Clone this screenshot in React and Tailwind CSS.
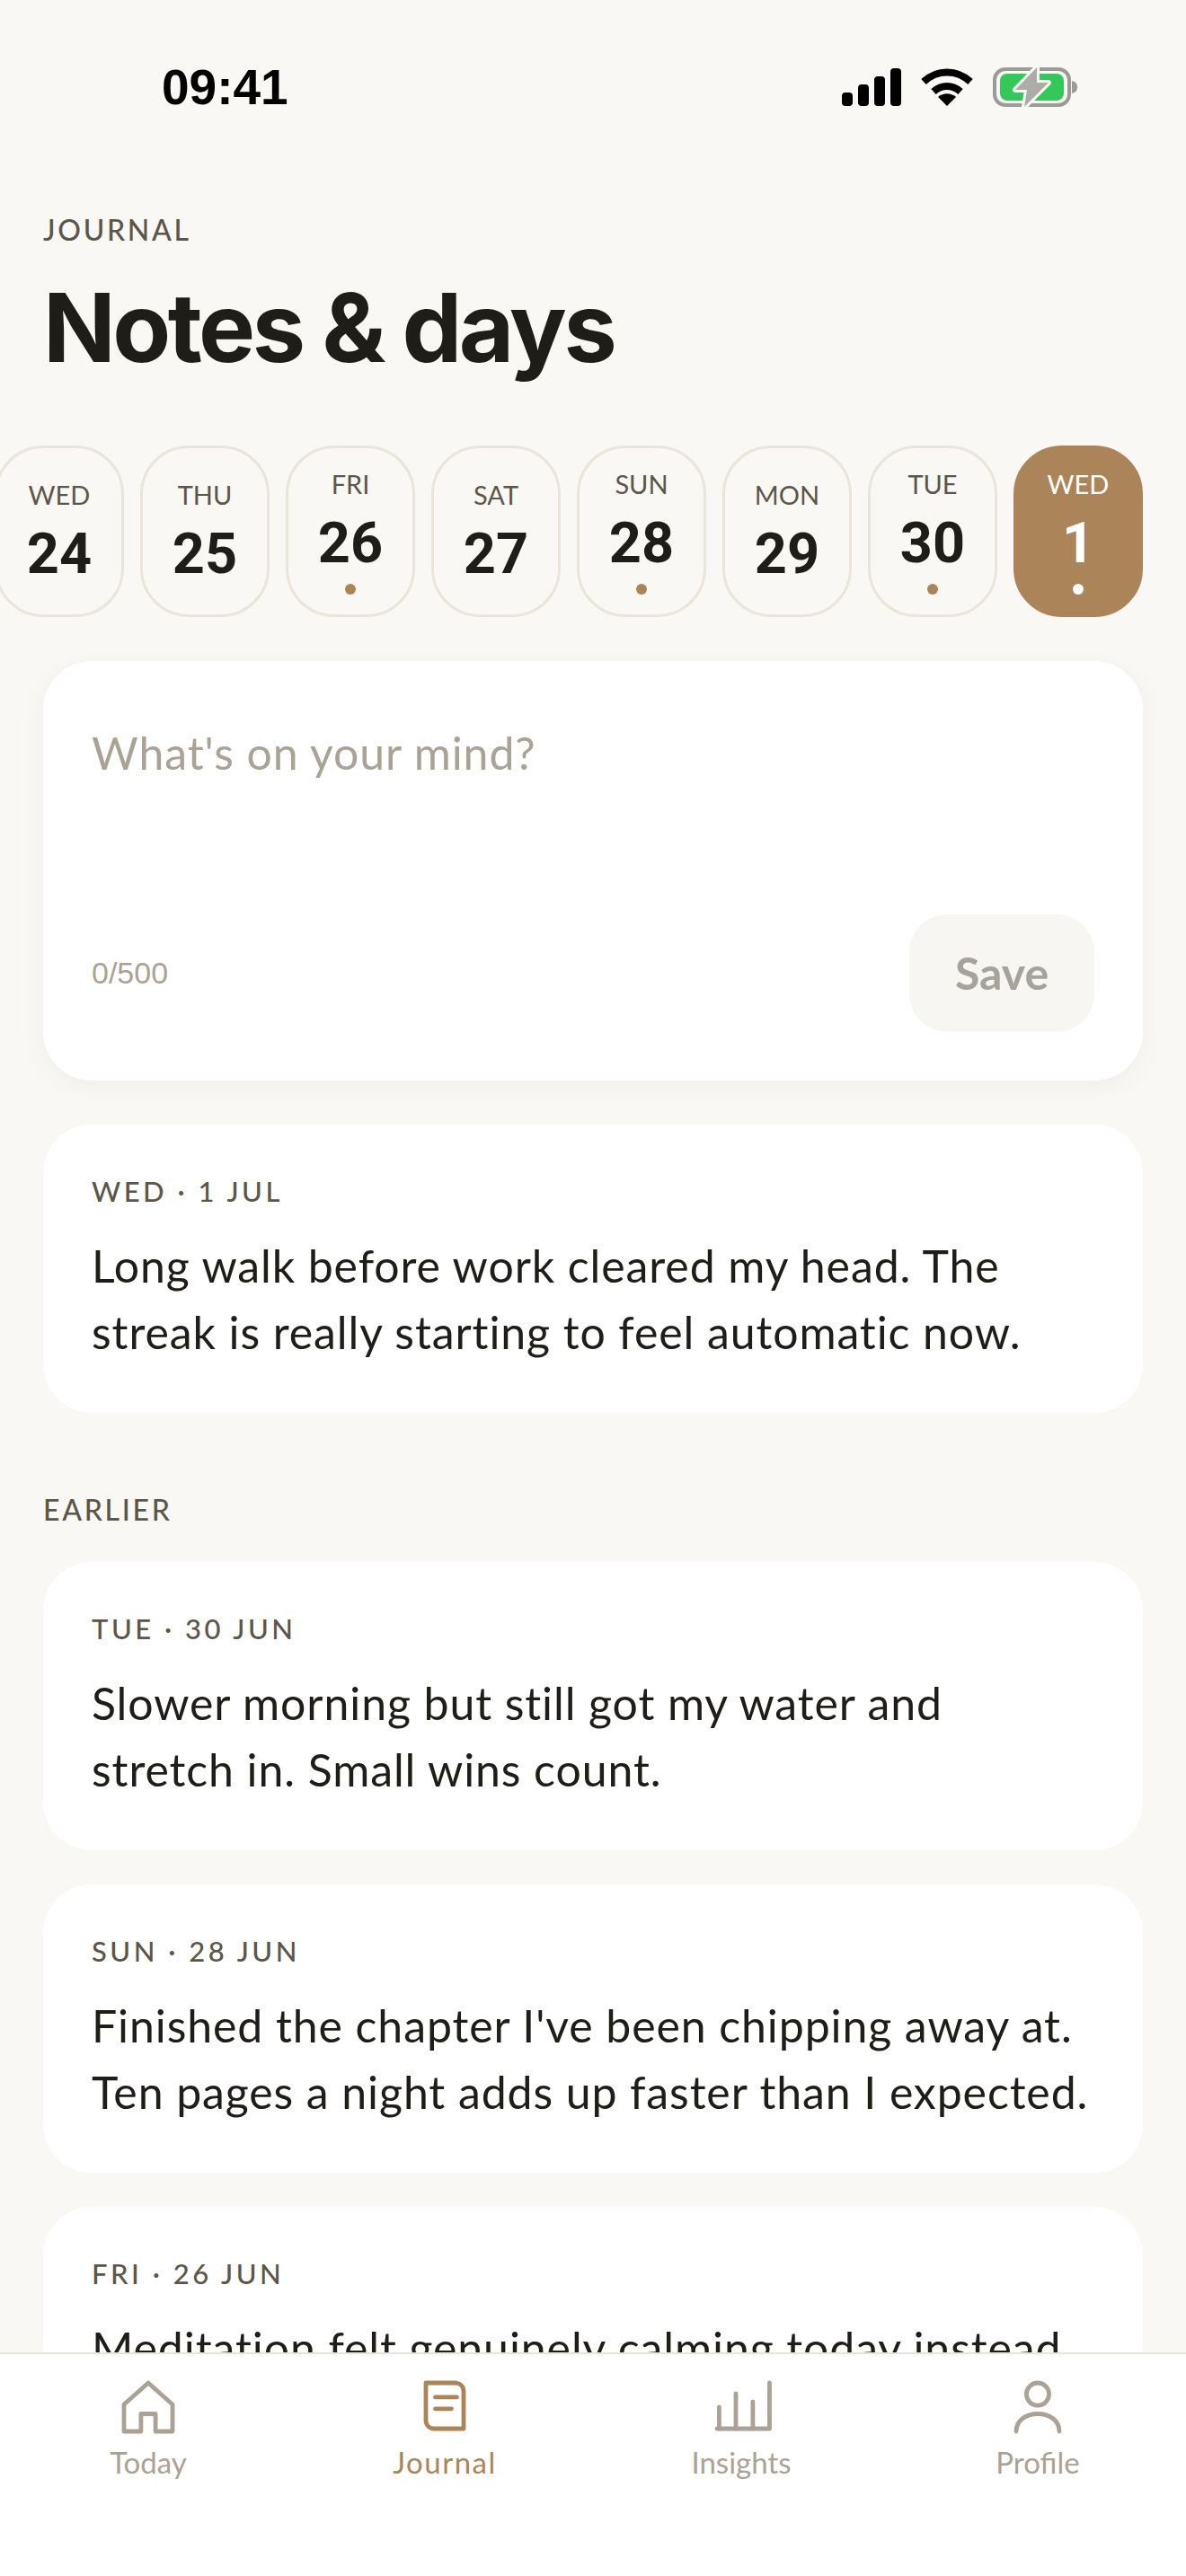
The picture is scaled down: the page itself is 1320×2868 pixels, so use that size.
// App.jsx
const sans = { fontFamily: 'Lato, sans-serif' }

const days = [
  { name: 'WED', num: 24 },
  { name: 'THU', num: 25 },
  { name: 'FRI', num: 26, dot: true },
  { name: 'SAT', num: 27 },
  { name: 'SUN', num: 28, dot: true },
  { name: 'MON', num: 29 },
  { name: 'TUE', num: 30, dot: true },
  { name: 'WED', num: 1, dot: true, active: true },
]

const earlier = [
  { date: 'TUE · 30 JUN', lines: ['Slower morning but still got my water and', 'stretch in. Small wins count.'] },
  { date: 'SUN · 28 JUN', lines: ["Finished the chapter I've been chipping away at.", 'Ten pages a night adds up faster than I expected.'] },
  { date: 'FRI · 26 JUN', lines: ['Meditation felt genuinely calming today instead', 'of like another thing on my list.'] },
]

function StatusBar() {
  return (
    <div className="relative h-[200px] shrink-0">
      <span className="absolute left-[180px] top-[66px] text-[55px] leading-[62px] font-bold text-black font-['Liberation_Sans',sans-serif]">
        09:41
      </span>
      <svg className="absolute left-[937px] top-[76px]" width="66" height="42" viewBox="0 0 66 42" fill="#000">
        <rect x="0" y="27" width="12" height="15" rx="4" />
        <rect x="18" y="18" width="12" height="24" rx="4" />
        <rect x="36" y="9" width="12" height="33" rx="4" />
        <rect x="54" y="0" width="12" height="42" rx="4" />
      </svg>
      <svg className="absolute left-[1025px] top-[75px]" width="58" height="43" viewBox="0 0 58 43" fill="none">
        <path d="M3 16 C18 2 40 2 55 16" stroke="#000" strokeWidth="8" />
        <path d="M14 27 C23 19 35 19 44 27" stroke="#000" strokeWidth="8" />
        <path d="M29 43 L19 33 C25 28 33 28 39 33 Z" fill="#000" />
      </svg>
      <svg className="absolute left-[1105px] top-[74px]" width="94" height="46" viewBox="0 0 94 46" fill="none">
        <rect x="2" y="3" width="83" height="40" rx="12" stroke="#9a9a96" strokeWidth="4" />
        <rect x="8" y="8" width="71" height="30" rx="8" fill="#34c759" />
        <path d="M88 16 C92 17 94 19 94 23 C94 27 92 29 88 30 Z" fill="#9a9a96" />
        <path d="M49 1 L25 26 H38 L35 45 L62 18 H49 Z" fill="#acaca8" stroke="#faf8f5" strokeWidth="6" strokeLinejoin="round" paintOrder="stroke" />
      </svg>
    </div>
  )
}

function DayChip({ day }) {
  const box = day.active ? 'bg-[#ab8559] border-[#ab8559]' : 'border-[#e9e5d8]'
  return (
    <div className={`w-[144px] h-[191px] shrink-0 rounded-[54px] border-[3px] flex flex-col items-center justify-center ${box}`}>
      <span className={`text-[29px] leading-[36px] ${day.active ? 'text-white' : 'text-[#5c5648]'}`}>
        {day.name}
      </span>
      <span className={`mt-[15px] text-[63px] leading-[66px] font-bold font-['Roboto',sans-serif] ${day.active ? 'text-white' : 'text-[#1f1d18]'}`}>
        {day.num}
      </span>
      {day.dot && <span className={`mt-[12px] w-[12px] h-[12px] rounded-full ${day.active ? 'bg-white' : 'bg-[#ab8559]'}`} />}
    </div>
  )
}

function NoteCard({ date, lines }) {
  return (
    <div className="bg-white rounded-[54px] px-[54px] pt-[54px] pb-[53px] shrink-0">
      <p className="text-[31px] leading-[40px] tracking-[3.5px] font-medium text-[#5c5648]">{date}</p>
      <p className="mt-[26px] text-[50px] leading-[74px] tracking-[0.9px] whitespace-nowrap text-[#1f1d18] [font-variant-ligatures:none]">
        {lines[0]}
        <br />
        {lines[1]}
      </p>
    </div>
  )
}

function TabItem({ label, active, children }) {
  return (
    <div className={`flex flex-col items-center ${active ? 'text-[#ab8559]' : 'text-[#aaa294]'}`}>
      <svg width="72" height="72" viewBox="0 0 24 24" fill="none" stroke="currentColor" strokeWidth="1.6" strokeLinecap="round" strokeLinejoin="round">
        {children}
      </svg>
      <span className={`text-[33px] leading-[50px] ${active ? 'tracking-[1.5px]' : ''}`}>{label}</span>
    </div>
  )
}

export default function App() {
  return (
    <div style={sans} className="w-[1320px] h-[2868px] bg-[#faf8f5] flex flex-col overflow-hidden">
      <StatusBar />

      <div className="flex-1 min-h-0 overflow-hidden">
        <p className="pl-[48px] mt-[36px] text-[32px] leading-[40px] tracking-[2.7px] font-medium text-[#5c5648]">JOURNAL</p>
        <h1 className="pl-[48px] mt-[24px] text-[106px] leading-[130px] font-bold tracking-[-3.5px] text-[#1f1d18] font-['Inter',sans-serif]">
          Notes &amp; days
        </h1>

        {/* Day strip */}
        <div className="mt-[66px] pr-[48px] flex justify-end gap-[18px]">
          {days.map((d) => (
            <DayChip key={d.name + d.num} day={d} />
          ))}
        </div>

        {/* Composer */}
        <div className="mx-[48px] mt-[49px] h-[467px] bg-white rounded-[54px] shadow-[0_6px_24px_rgba(60,50,30,0.05)] px-[54px] pt-[72px] pb-[54px] flex flex-col justify-between">
          <p className="text-[50px] leading-[60px] tracking-[0.9px] text-[#aaa294]">What's on your mind?</p>
          <div className="flex items-center justify-between">
            <span className="text-[34px] text-[#aaa294] font-['Liberation_Sans',sans-serif]">0/500</span>
            <button className="w-[206px] h-[131px] rounded-[42px] bg-[#f7f6f2] text-[50px] font-bold text-[#a5a39c]">Save</button>
          </div>
        </div>

        <div className="mx-[48px] mt-[49px] flex flex-col">
          <NoteCard
            date="WED · 1 JUL"
            lines={['Long walk before work cleared my head. The', 'streak is really starting to feel automatic now.']}
          />
          <p className="mt-[88px] text-[32px] leading-[40px] tracking-[2.7px] font-medium text-[#5c5648]">EARLIER</p>
          <div className="mt-[38px] flex flex-col gap-[38px]">
            {earlier.map((n) => (
              <NoteCard key={n.date} date={n.date} lines={n.lines} />
            ))}
          </div>
        </div>
      </div>

      {/* Tab bar */}
      <nav className="h-[249px] shrink-0 bg-white border-t-[2px] border-[#e8e4d9] grid grid-cols-4 pt-[23px]">
        <TabItem label="Today">
          <path d="M3 11 L12 3 L21 11 V21 H14.7 V14.5 H9.3 V21 H3 Z" />
        </TabItem>
        <TabItem label="Journal" active>
          <path d="M5 3 H16 A3 3 0 0 1 19 6 V20 H8 A3 3 0 0 1 5 17 Z" />
          <path d="M8.5 8.3 H16.5" />
          <path d="M8.5 12.6 H14.5" />
        </TabItem>
        <TabItem label="Insights">
          <path d="M3 20 H22.5 V3" />
          <path d="M3.8 20 V12" />
          <path d="M10 20 V7" />
          <path d="M16.3 20 V10" />
        </TabItem>
        <TabItem label="Profile">
          <circle cx="12" cy="7.2" r="4.2" />
          <path d="M4 21 C4 17 7.5 14.5 12 14.5 S20 17 20 21" />
        </TabItem>
      </nav>
    </div>
  )
}
